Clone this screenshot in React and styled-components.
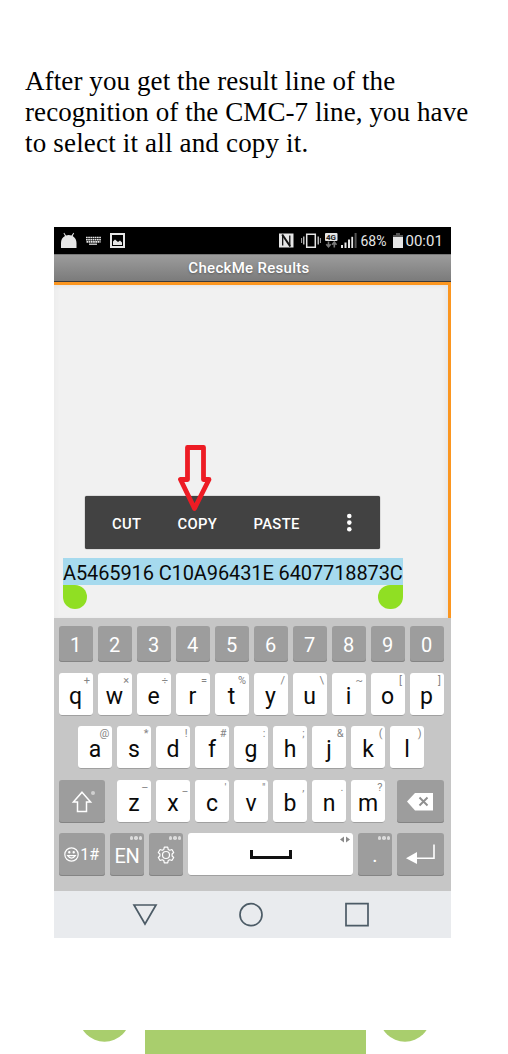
import React from 'react';
import styled, { createGlobalStyle } from 'styled-components';

const Global = createGlobalStyle`
  * { box-sizing: border-box; }
  html, body { margin: 0; background: #fff; overflow: hidden; }
  svg { display: block; flex: none; }
`;

const Page = styled.main`
  width: 508px;
  height: 1054px;
  overflow: hidden;
  display: flex;
  flex-direction: column;
  background: #fff;
`;

const Intro = styled.p`
  margin: 66px 0 0 25px;
  height: 161px;
  font: 27px/31px 'Liberation Serif', serif;
  color: #000;
  white-space: nowrap;
`;

const IntroLine = styled.span`
  display: block;
  letter-spacing: ${(p) => p.$spacing || 0}px;
`;

const Phone = styled.section`
  width: 397px;
  height: 711px;
  margin-left: 54px;
  flex: none;
  display: flex;
  flex-direction: column;
  font-family: Roboto, sans-serif;
`;

const StatusBar = styled.header`
  height: 27px;
  flex: none;
  background: #000;
  color: #e6e6e6;
  display: flex;
  align-items: center;
`;

const StatusText = styled.span`
  width: ${(p) => p.$width}px;
  margin-left: ${(p) => p.$before || 0}px;
  font-size: ${(p) => p.$size}px;
  letter-spacing: ${(p) => p.$spacing || 0}px;
  line-height: 27px;
  padding-top: 1px;
  white-space: nowrap;
`;

const TitleBar = styled.div`
  height: 28px;
  flex: none;
  background: linear-gradient(#9c9c9c, #7b7b7b);
  border-top: 1px solid #777;
  border-bottom: 1px solid #3a3a3a;
  color: #fff;
  font-weight: 500;
  font-size: 15px;
  letter-spacing: 0.3px;
  line-height: 27px;
  text-align: center;
  padding-right: 7px;
  text-shadow: 0 1px 2px rgba(0, 0, 0, 0.3);
`;

const Results = styled.div`
  position: relative;
  height: 336px;
  flex: none;
  background: #f1f1f1;
  border-top: 3px solid #fb9620;
  border-right: 3px solid #fb9620;
  box-shadow: inset -3px 2px 4px rgba(0, 0, 0, 0.04), inset 3px 0 4px rgba(0, 0, 0, 0.02);
`;

const ContextMenu = styled.div`
  position: absolute;
  left: 31px;
  top: 211px;
  width: 295px;
  height: 53px;
  border-radius: 2px;
  background: #424242;
  box-shadow: 0 0 1px #222;
  display: flex;
  align-items: center;
  padding-left: 27px;
  color: #fff;
  font-size: 14.8px;
  font-weight: 500;
`;

const MenuItem = styled.span`
  width: ${(p) => p.$width}px;
  letter-spacing: 0.35px;
  padding-top: 2px;
`;

const Pointer = styled.svg`
  position: absolute;
  left: 123px;
  top: 159px;
`;

const Selection = styled.div`
  position: absolute;
  left: 9px;
  top: 273px;
  width: 340px;
  height: 27px;
  background: #a6daee;
  color: #0a0a0a;
  font-size: 20px;
  line-height: 30px;
  white-space: nowrap;
  letter-spacing: -0.11px;
`;

const Handle = styled.i`
  position: absolute;
  top: 300px;
  left: ${(p) => p.$left}px;
  width: ${(p) => (p.$end ? 25 : 24)}px;
  height: 24px;
  background: #90df23;
  border-radius: ${(p) => (p.$end ? '12px 0 12px 12px' : '0 12px 12px 12px')};
`;

const Keyboard = styled.div`
  height: 273px;
  flex: none;
  background: #c6c6c6;
  padding: 8px 0 0 4.5px;
  display: flex;
  flex-direction: column;
  gap: 10.5px;
`;

const KeyRow = styled.div`
  display: flex;
  gap: 5px;
  height: ${(p) => p.$height || 43}px;
  padding-left: ${(p) => p.$indent || 0}px;
`;

const Key = styled.div`
  position: relative;
  width: ${(p) => p.$width || 34}px;
  margin-right: ${(p) => p.$after || 0}px;
  border-radius: 3px;
  background: ${(p) => (p.$dark ? '#9d9d9d' : '#fff')};
  color: ${(p) => (p.$dark ? '#fff' : '#0a0a0a')};
  box-shadow: inset 0 -1px 0 ${(p) => (p.$dark ? '#848484' : '#a0a0a0')};
  display: flex;
  align-items: center;
  justify-content: center;
  padding-top: ${(p) => p.$drop ?? 4}px;
  font-size: ${(p) => p.$size || 23}px;
  letter-spacing: ${(p) => p.$spacing || 0}px;
  line-height: 1;
`;

const Hint = styled.small`
  position: absolute;
  top: 2px;
  right: 2.5px;
  font-size: 11px;
  line-height: 11px;
  color: #858585;
`;

const Dots = styled.i`
  position: absolute;
  top: 3px;
  right: 2px;
  display: flex;
  gap: 1px;
  &::before, &::after, b { content: ''; width: 3.5px; height: 3.5px; border-radius: 50%; background: #dcdcdc; }
`;

const ShiftDot = styled.i`
  position: absolute;
  left: 32px;
  top: 11px;
  width: 4px;
  height: 4px;
  border-radius: 50%;
  background: #d0d0d0;
`;

const CursorArrows = styled.svg`
  position: absolute;
  right: 2px;
  top: 3px;
`;

const NavBar = styled.nav`
  height: 47px;
  flex: none;
  background: #e9ebee;
  display: flex;
  align-items: center;
  padding-left: 78px;
  gap: 80px;
`;

const Footer = styled.footer`
  margin-top: 92px;
  height: 24px;
  flex: none;
`;

const topLetters = [['q', '+'], ['w', '×'], ['e', '÷'], ['r', '='], ['t', '%'], ['y', '/'], ['u', '\\'], ['i', '~'], ['o', '['], ['p', ']']];
const middleLetters = [['a', '@'], ['s', '*'], ['d', '!'], ['f', '#'], ['g', ':'], ['h', ';'], ['j', '&'], ['k', '('], ['l', ')']];
const bottomLetters = [['z', '–'], ['x', '_'], ['c', "'"], ['v', '"'], ['b', ','], ['n', '.'], ['m', '?']];

const Letters = ({ keys, after = 0 }) =>
  keys.map(([k, h], i) => (
    <Key key={k} $after={i === keys.length - 1 ? after : 0}>
      {k}
      <Hint>{h}</Hint>
    </Key>
  ));

const LeftStatusIcons = () => (
  <svg width="224" height="27" fill="#e6e6e6">
    <path d="M7 21V16Q7 11 11 9L9.5 6.3 10.2 5.8 12 8.4Q14.5 7.6 17.5 8.4L19.4 5.8 20.1 6.3 18.7 9Q22.5 11.5 22.5 16V21Z" />
    <path d="M32 10.5h15M32 12.7h15M32.5 14.9h14" stroke="#e6e6e6" strokeWidth="1.6" strokeDasharray="1.7 .5" />
    <path d="M35 17.2h8" stroke="#e6e6e6" strokeWidth="1.2" />
    <path d="M56 6h15v15H56ZM58 8v11h11V8Z" fillRule="evenodd" />
    <path d="M59 18V14.5L61 12.5 64 15 66 13.5 68 15.5V18Z" />
  </svg>
);

const RightStatusIcons = () => (
  <svg width="80" height="27" fill="#e6e6e6">
    <path d="M1 6.5h14.5v14H1Z" />
    <path d="M4.700 18.500V9M11.800 8.500V18" fill="none" stroke="#000" strokeWidth="1.200" />
    <path d="M4.200 7.500L12.300 19.500" fill="none" stroke="#111" strokeWidth="2" />
    <path d="M28.700 7.200h8.600v13h-8.600Z" fill="none" stroke="#e6e6e6" strokeWidth="1.500" />
    <path d="M25.800 9.500v8M40.200 9.500v8" stroke="#e6e6e6" strokeWidth="1.200" />
    <path d="M23.600 11v5M42.400 11v5" stroke="#aaa" strokeWidth="1" />
    <rect x="47" y="6" width="12.500" height="8" rx="1" />
    <text x="48" y="13" fontSize="8" fontWeight="700" fill="#222" fontFamily="Roboto, sans-serif">4G</text>
    <path d="M50.500 14.500v5M48.300 17.200l2.200 2.600 2.200-2.600M56.300 20.500v-5M54.100 17.700l2.200-2.600 2.200 2.600" fill="none" stroke="#777" strokeWidth="1.600" />
    <path d="M63 18h2v3h-2zM66.500 15.500h2V21h-2zM70 12.500h2V21h-2z" />
    <path d="M73.300 9.800h1.800V21h-1.800z" />
    <path d="M76.600 6h2v15h-2z" fill="#555" />
  </svg>
);

const Battery = () => (
  <svg width="14" height="27">
    <path d="M4 6h4v2h3v3H1V8h3Z" fill="#555" />
    <path d="M1 10h10v11H1Z" fill="#e6e6e6" />
  </svg>
);

export default function App() {
  return (
    <Page>
      <Global />
      <Intro>
        <IntroLine $spacing={0.1}>After you get the result line of the</IntroLine>
        <IntroLine $spacing={0.08}>recognition of the CMC-7 line, you have</IntroLine>
        <IntroLine $spacing={0.18}>to select it all and copy it.</IntroLine>
      </Intro>
      <Phone>
        <StatusBar>
          <LeftStatusIcons />
          <RightStatusIcons />
          <StatusText $width={31} $size={14} $before={2.5}>68%</StatusText>
          <Battery />
          <StatusText $width={42} $size={15}>00:01</StatusText>
        </StatusBar>
        <TitleBar>CheckMe Results</TitleBar>
        <Results>
          <ContextMenu>
            <MenuItem $width={65.5}>CUT</MenuItem>
            <MenuItem $width={76}>COPY</MenuItem>
            <MenuItem $width={92}>PASTE</MenuItem>
            <svg width="6" height="20" fill="#fff">
              <circle cx="3.3" cy="3" r="2.3" />
              <circle cx="3.3" cy="9.6" r="2.3" />
              <circle cx="3.3" cy="16.2" r="2.3" />
            </svg>
          </ContextMenu>
          <Pointer width="36" height="70">
            <path d="M10.5 3.5H26.5V35.5H32L17.5 64.5L3.5 35.5H10.5Z" fill="none" stroke="#ed1c24" strokeWidth="4.8" strokeLinejoin="round" />
          </Pointer>
          <Selection>A5465916 C10A96431E 6407718873C</Selection>
          <Handle $left={9} />
          <Handle $left={324} $end />
        </Results>
        <Keyboard>
          <KeyRow $height={36}>
            {'1234567890'.split('').map((n) => (
              <Key key={n} $dark $size={20} $drop={2}>{n}</Key>
            ))}
          </KeyRow>
          <KeyRow><Letters keys={topLetters} /></KeyRow>
          <KeyRow $indent={19.5}><Letters keys={middleLetters} /></KeyRow>
          <KeyRow>
            <Key $dark $width={46.5} $after={7} $drop={0}>
              <svg width="46" height="43">
                <path d="M23 12.2L31.6 22H27.5V31.5H18.5V22H14.4Z" fill="none" stroke="#fff" strokeWidth="1.5" />
              </svg>
              <ShiftDot />
            </Key>
            <Letters keys={bottomLetters} after={7} />
            <Key $dark $width={46.5} $drop={0}>
              <svg width="46" height="43">
                <path d="M10 21.5L18 13H36V30.5H18Z" fill="#fff" />
                <path d="M22.5 17.5l8 8M30.5 17.5l-8 8" stroke="#8f8f8f" strokeWidth="1.9" />
              </svg>
            </Key>
          </KeyRow>
          <KeyRow>
            <Key $dark $width={46.5} $size={16} $drop={0}>
              <svg width="16" height="15" fill="none" stroke="#fff" strokeWidth="1.2">
                <circle cx="7.5" cy="7.5" r="6.7" />
                <path d="M3.7 8.6Q7.5 13.8 11.3 8.6Z" />
                <circle cx="5.3" cy="5.3" r=".6" fill="#fff" />
                <circle cx="9.7" cy="5.3" r=".6" fill="#fff" />
              </svg>
              1#
            </Key>
            <Key $dark $size={20} $drop={3} $spacing={-0.4}>
              EN<Dots><b /></Dots>
            </Key>
            <Key $dark $drop={0}>
              <svg width="18" height="18" viewBox="0 0 18 18" fill="none" stroke="#fff" strokeWidth="1.2" strokeLinejoin="round">
                <path d="M7.3 1.2h3.4l.5 2.2 1.6.9 2.1-.8 1.8 3-1.6 1.5v2l1.6 1.5-1.8 3-2.1-.8-1.6.9-.5 2.2H7.3l-.5-2.2-1.6-.9-2.1.8-1.8-3L2.9 10V8L1.3 6.5l1.8-3 2.1.8 1.6-.9Z" />
                <circle cx="9" cy="9" r="3.5" />
              </svg>
              <Dots><b /></Dots>
            </Key>
            <Key $width={165} $drop={0}>
              <svg width="42" height="12">
                <path d="M1.5 1V8.5H40.5V1" fill="none" stroke="#111" strokeWidth="3" />
              </svg>
              <CursorArrows width="12" height="7" fill="#8a8a8a">
                <path d="M5 .5V6.5L1 3.5ZM7 .5V6.5L11 3.5Z" />
              </CursorArrows>
            </Key>
            <Key $dark $size={20} $drop={0}>
              .<Dots><b /></Dots>
            </Key>
            <Key $dark $width={46.5} $drop={0}>
              <svg width="46" height="43">
                <path d="M37 11.5V25.3H20" fill="none" stroke="#fff" strokeWidth="1.6" />
                <path d="M9 25.3L20 19V31Z" fill="#fff" />
              </svg>
            </Key>
          </KeyRow>
        </Keyboard>
        <NavBar>
          <svg width="26" height="26" fill="none" stroke="#4c5b66" strokeWidth="1.7">
            <path d="M2 3H24L13 22Z" />
          </svg>
          <svg width="26" height="26" fill="none" stroke="#4c5b66" strokeWidth="1.7">
            <circle cx="13" cy="12.7" r="11" />
          </svg>
          <svg width="26" height="26" fill="none" stroke="#4c5b66" strokeWidth="1.7">
            <path d="M2 1.7H24V23.7H2Z" />
          </svg>
        </NavBar>
      </Phone>
      <Footer>
        <svg width="508" height="24" fill="#a9ce6d">
          <circle cx="104.5" cy="-13.8" r="25.6" />
          <path d="M145 0H366V24H145Z" />
          <circle cx="405" cy="-13.8" r="25.6" />
        </svg>
      </Footer>
    </Page>
  );
}
